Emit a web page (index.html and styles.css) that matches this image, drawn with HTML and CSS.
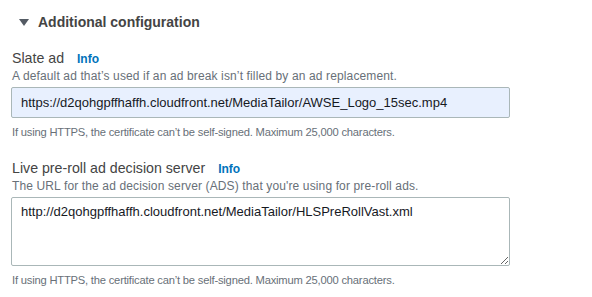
FILE: index.html
```html
<!DOCTYPE html>
<html lang="en">
<head>
    <meta charset="UTF-8">
    <title>Additional configuration</title>
    <link rel="stylesheet" href="styles.css">
</head>
<body>
    <div class="section">
        <div class="section-header">
            <span class="caret"></span>
            <span class="section-title">Additional configuration</span>
        </div>

        <div class="field">
            <label class="field-label" for="slate-ad">Slate ad <a class="info" href="#">Info</a></label>
            <div class="field-desc">A default ad that’s used if an ad break isn’t filled by an ad replacement.</div>
            <input class="text-input filled" id="slate-ad" type="text" value="https://d2qohgpffhaffh.cloudfront.net/MediaTailor/AWSE_Logo_15sec.mp4">
            <div class="field-hint">If using HTTPS, the certificate can’t be self-signed. Maximum 25,000 characters.</div>
        </div>

        <div class="field">
            <label class="field-label" for="preroll-ads">Live pre-roll ad decision server <a class="info" href="#">Info</a></label>
            <div class="field-desc">The URL for the ad decision server (ADS) that you're using for pre-roll ads.</div>
            <textarea class="text-area" id="preroll-ads">http://d2qohgpffhaffh.cloudfront.net/MediaTailor/HLSPreRollVast.xml</textarea>
            <div class="field-hint">If using HTTPS, the certificate can’t be self-signed. Maximum 25,000 characters.</div>
        </div>
    </div>
</body>
</html>
```

FILE: styles.css
```css
body {
    margin: 0;
    font-family: "Liberation Sans", Arial, sans-serif;
    background-color: #fff;
    color: #16191f;
}
.section {
    padding: 12px 82px 0 11px;
}
.section-header {
    display: flex;
    align-items: center;
    height: 20px;
    padding-left: 8px;
    margin-bottom: 17px;
}
.caret {
    width: 0;
    height: 0;
    border-left: 5px solid transparent;
    border-right: 5px solid transparent;
    border-top: 7px solid #545b64;
    margin-right: 9px;
}
.section-title {
    font-size: 14px;
    font-weight: bold;
    color: #444;
}
.field {
    margin-bottom: 19px;
}
.field-label {
    display: block;
    font-size: 14.2px;
    color: #444;
    line-height: 18px;
    padding-left: 1px;
}
.info {
    font-size: 12px;
    font-weight: bold;
    color: #0073bb;
    text-decoration: none;
    margin-left: 9px;
}
.field-desc, .field-hint {
    color: #687078;
    line-height: 16px;
    padding-left: 1px;
}
.field-desc {
    font-size: 12px;
    letter-spacing: 0.13px;
}
.field-hint {
    margin-top: 6px;
    font-size: 11.2px;
    letter-spacing: -0.2px;
}
.text-input, .text-area {
    display: block;
    box-sizing: border-box;
    width: 100%;
    margin-top: 3px;
    border: 1px solid #aab7b8;
    border-radius: 2px;
    padding: 0 9px;
    font-family: "Liberation Sans", Arial, sans-serif;
    font-size: 13px;
    color: #16191f;
    outline: none;
}
.text-input {
    height: 31px;
}
.text-input.filled {
    background-color: #e8f0fe;
}
.text-area {
    height: 69px;
    padding-top: 5px;
    resize: vertical;
    line-height: 18px;
}
```
